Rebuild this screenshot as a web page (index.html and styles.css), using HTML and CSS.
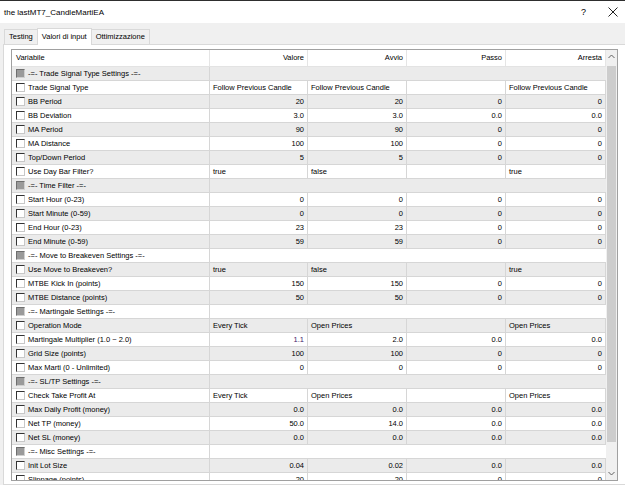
FILE: index.html
```html
<!DOCTYPE html>
<html>
<head>
    <title>the lastMT7_CandleMartiEA</title>
    <link rel="stylesheet" href="styles.css">
</head>
<body>
    <div class="window">
        <div class="titlebar">
            <span class="title">the lastMT7_CandleMartiEA</span>
            <span class="help">?</span>
            <svg class="close" width="10" height="10" viewBox="0 0 10 10">
                <path d="M0.5 0.5 L9.5 9.5 M9.5 0.5 L0.5 9.5" stroke="#222" stroke-width="1" fill="none"/>
            </svg>
        </div>
        <div class="tabs">
            <div class="tab">Testing</div>
            <div class="tab active">Valori di input</div>
            <div class="tab">Ottimizzazione</div>
        </div>
        <div class="page">
            <div class="listview">
                <div class="grid">
                    <div class="row head">
                        <div class="cell">Variabile</div>
                        <div class="cell num">Valore</div>
                        <div class="cell num">Avvio</div>
                        <div class="cell num">Passo</div>
                        <div class="cell num">Arresta</div>
                    </div>
                    <div class="rows">
                        <div class="row group"><div class="cell"><span class="chk"></span>-=- Trade Signal Type Settings -=-</div><div class="cell span"></div></div>
                        <div class="row"><div class="cell"><span class="chk"></span>Trade Signal Type</div><div class="cell">Follow Previous Candle</div><div class="cell">Follow Previous Candle</div><div class="cell"></div><div class="cell">Follow Previous Candle</div></div>
                        <div class="row"><div class="cell"><span class="chk"></span>BB Period</div><div class="cell num">20</div><div class="cell num">20</div><div class="cell num">0</div><div class="cell num">0</div></div>
                        <div class="row"><div class="cell"><span class="chk"></span>BB Deviation</div><div class="cell num">3.0</div><div class="cell num">3.0</div><div class="cell num">0.0</div><div class="cell num">0.0</div></div>
                        <div class="row"><div class="cell"><span class="chk"></span>MA Period</div><div class="cell num">90</div><div class="cell num">90</div><div class="cell num">0</div><div class="cell num">0</div></div>
                        <div class="row"><div class="cell"><span class="chk"></span>MA Distance</div><div class="cell num">100</div><div class="cell num">100</div><div class="cell num">0</div><div class="cell num">0</div></div>
                        <div class="row"><div class="cell"><span class="chk"></span>Top/Down Period</div><div class="cell num">5</div><div class="cell num">5</div><div class="cell num">0</div><div class="cell num">0</div></div>
                        <div class="row"><div class="cell"><span class="chk"></span>Use Day Bar Filter?</div><div class="cell">true</div><div class="cell">false</div><div class="cell"></div><div class="cell">true</div></div>
                        <div class="row group"><div class="cell"><span class="chk"></span>-=- Time Filter -=-</div><div class="cell span"></div></div>
                        <div class="row"><div class="cell"><span class="chk"></span>Start Hour (0-23)</div><div class="cell num">0</div><div class="cell num">0</div><div class="cell num">0</div><div class="cell num">0</div></div>
                        <div class="row"><div class="cell"><span class="chk"></span>Start Minute (0-59)</div><div class="cell num">0</div><div class="cell num">0</div><div class="cell num">0</div><div class="cell num">0</div></div>
                        <div class="row"><div class="cell"><span class="chk"></span>End Hour (0-23)</div><div class="cell num">23</div><div class="cell num">23</div><div class="cell num">0</div><div class="cell num">0</div></div>
                        <div class="row"><div class="cell"><span class="chk"></span>End Minute (0-59)</div><div class="cell num">59</div><div class="cell num">59</div><div class="cell num">0</div><div class="cell num">0</div></div>
                        <div class="row group"><div class="cell"><span class="chk"></span>-=- Move to Breakeven Settings -=-</div><div class="cell span"></div></div>
                        <div class="row"><div class="cell"><span class="chk"></span>Use Move to Breakeven?</div><div class="cell">true</div><div class="cell">false</div><div class="cell"></div><div class="cell">true</div></div>
                        <div class="row"><div class="cell"><span class="chk"></span>MTBE Kick In (points)</div><div class="cell num">150</div><div class="cell num">150</div><div class="cell num">0</div><div class="cell num">0</div></div>
                        <div class="row"><div class="cell"><span class="chk"></span>MTBE Distance (points)</div><div class="cell num">50</div><div class="cell num">50</div><div class="cell num">0</div><div class="cell num">0</div></div>
                        <div class="row group"><div class="cell"><span class="chk"></span>-=- Martingale Settings -=-</div><div class="cell span"></div></div>
                        <div class="row"><div class="cell"><span class="chk"></span>Operation Mode</div><div class="cell">Every Tick</div><div class="cell">Open Prices</div><div class="cell"></div><div class="cell">Open Prices</div></div>
                        <div class="row"><div class="cell"><span class="chk"></span>Martingale Multiplier (1.0 ~ 2.0)</div><div class="cell num edited">1.1</div><div class="cell num">2.0</div><div class="cell num">0.0</div><div class="cell num">0.0</div></div>
                        <div class="row"><div class="cell"><span class="chk"></span>Grid Size (points)</div><div class="cell num">100</div><div class="cell num">100</div><div class="cell num">0</div><div class="cell num">0</div></div>
                        <div class="row"><div class="cell"><span class="chk"></span>Max Marti (0 - Unlimited)</div><div class="cell num">0</div><div class="cell num">0</div><div class="cell num">0</div><div class="cell num">0</div></div>
                        <div class="row group"><div class="cell"><span class="chk"></span>-=- SL/TP Settings -=-</div><div class="cell span"></div></div>
                        <div class="row"><div class="cell"><span class="chk"></span>Check Take Profit At</div><div class="cell">Every Tick</div><div class="cell">Open Prices</div><div class="cell"></div><div class="cell">Open Prices</div></div>
                        <div class="row"><div class="cell"><span class="chk"></span>Max Daily Profit (money)</div><div class="cell num">0.0</div><div class="cell num">0.0</div><div class="cell num">0.0</div><div class="cell num">0.0</div></div>
                        <div class="row"><div class="cell"><span class="chk"></span>Net TP (money)</div><div class="cell num">50.0</div><div class="cell num">14.0</div><div class="cell num">0.0</div><div class="cell num">0.0</div></div>
                        <div class="row"><div class="cell"><span class="chk"></span>Net SL (money)</div><div class="cell num">0.0</div><div class="cell num">0.0</div><div class="cell num">0.0</div><div class="cell num">0.0</div></div>
                        <div class="row group"><div class="cell"><span class="chk"></span>-=- Misc Settings -=-</div><div class="cell span"></div></div>
                        <div class="row"><div class="cell"><span class="chk"></span>Init Lot Size</div><div class="cell num">0.04</div><div class="cell num">0.02</div><div class="cell num">0.0</div><div class="cell num">0.0</div></div>
                        <div class="row"><div class="cell"><span class="chk"></span>Slippage (points)</div><div class="cell num">20</div><div class="cell num">20</div><div class="cell num">0</div><div class="cell num">0</div></div>
                    </div>
                </div>
                <div class="scrollbar">
                    <svg class="arrow" width="7" height="5" viewBox="0 0 7 5">
                        <path d="M0.5 4 L3.5 1 L6.5 4" stroke="#606060" fill="none"/>
                    </svg>
                    <div class="track"><div class="thumb"></div></div>
                    <svg class="arrow" width="7" height="5" viewBox="0 0 7 5">
                        <path d="M0.5 1 L3.5 4 L6.5 1" stroke="#606060" fill="none"/>
                    </svg>
                </div>
            </div>
        </div>
    </div>
</body>
</html>
```

FILE: styles.css
```css
body {
    margin: 0;
    background-color: #f0f0f0;
    font-family: "Liberation Sans", Arial, sans-serif;
    font-size: 7.5px;
    color: #000;
}

.window {
    width: 625px;
    height: 485px;
    display: flex;
    flex-direction: column;
    overflow: hidden;
}

.titlebar {
    height: 22px;
    border-top: 1px solid #2e2e2e;
    background-color: #fff;
    display: flex;
    align-items: center;
    padding: 0 7px 0 4px;
}

.title {
    font-size: 8px;
    flex: 1;
}

.help {
    font-size: 9px;
    margin-right: 22px;
}

.close {
    display: block;
}

.tabs {
    height: 21px;
    display: flex;
    align-items: flex-end;
    padding-left: 4px;
}

.tab {
    height: 14px;
    line-height: 14px;
    padding: 0 4px;
    border: 1px solid #d9d9d9;
    border-bottom: none;
    margin-right: -1px;
    background-color: #f0f0f0;
}

.tab.active {
    height: 16px;
    line-height: 15px;
    background-color: #fff;
    position: relative;
    z-index: 1;
    margin-bottom: -1px;
}

.page {
    flex: 1;
    margin: 0 0 0 3px;
    border: 1px solid #d9d9d9;
    border-right: none;
    background-color: #fff;
    padding: 4px 4px 0 7px;
}

.listview {
    width: 605px;
    height: 430px;
    border: 1px solid #a0a0a0;
    display: flex;
    background-color: #fff;
}

.grid {
    width: 594px;
    height: 430px;
    overflow: hidden;
}

.row {
    display: grid;
    grid-template-columns: 198px 98px 99px 99px 100px;
    height: 14px;
    box-sizing: border-box;
    border-bottom: 1px solid #d6d6d6;
}

.row.head {
    height: 17px;
    border-bottom: 1px solid #e3e3e3;
}

.rows .row:nth-child(odd) {
    background-color: #ebebeb;
}

.cell {
    border-right: 1px solid #d6d6d6;
    padding: 0 3px;
    line-height: 13px;
    white-space: nowrap;
    overflow: hidden;
    display: flex;
    align-items: center;
}

.head .cell {
    line-height: 16px;
    padding: 0 3px 0 4px;
    border-right-color: #e5e5e5;
}

.num {
    justify-content: flex-end;
}

.edited {
    color: #3f1d6b;
}

.group .span {
    grid-column: 2 / -1;
    border-right: none;
}

.chk {
    width: 9px;
    height: 9px;
    box-sizing: border-box;
    border: 1px solid #333;
    border-right-color: #c8c8c8;
    border-bottom-color: #c8c8c8;
    background-color: #fff;
    margin: 0 3px 0 1px;
    flex: none;
}

.group .chk {
    background-color: #9a9a9a;
    border-color: #6e6e6e #d0d0d0 #d0d0d0 #6e6e6e;
}

.scrollbar {
    width: 11px;
    background-color: #f0f0f0;
    display: flex;
    flex-direction: column;
    align-items: center;
}

.arrow {
    display: block;
    margin: 4px 0;
}

.track {
    flex: 1;
    width: 9px;
    padding-top: 3px;
}

.thumb {
    height: 376px;
    background-color: #cdcdcd;
}
```
